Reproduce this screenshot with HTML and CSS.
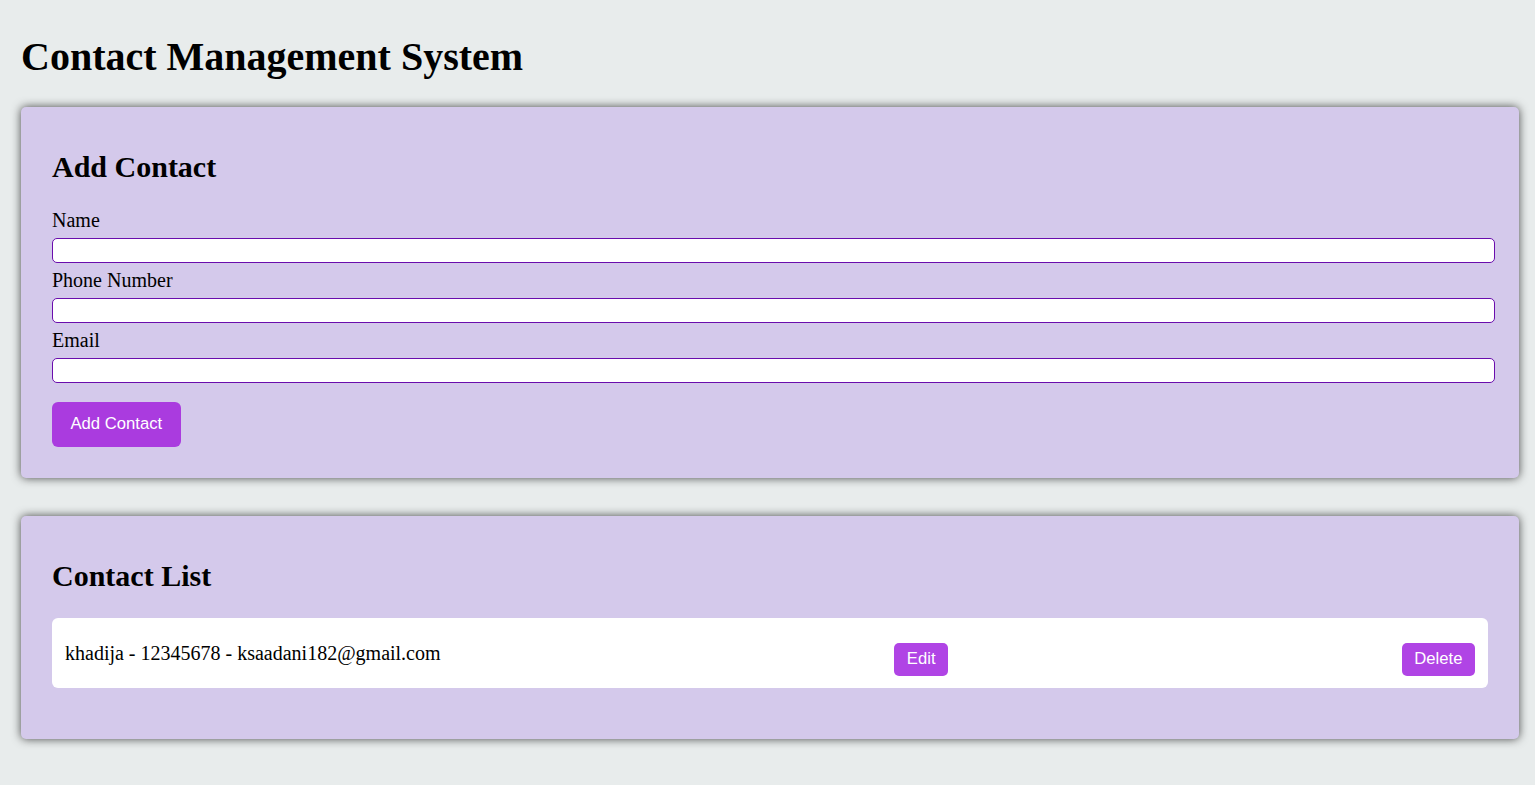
FILE: index.html
```html
<!DOCTYPE html>
<html lang="en">
<head>
<meta charset="utf-8">
<title>Contact Management System</title>
<link rel="stylesheet" href="styles.css">
</head>
<body>
  <h1 class="title">Contact Management System</h1>

  <section class="card">
    <h2 class="card-title">Add Contact</h2>
    <form class="form">
      <label class="label" for="name">Name</label>
      <input class="input" id="name" type="text">
      <label class="label" for="phone">Phone Number</label>
      <input class="input" id="phone" type="text">
      <label class="label" for="email">Email</label>
      <input class="input" id="email" type="text">
      <button class="btn btn-primary" type="button">Add Contact</button>
    </form>
  </section>

  <section class="card card-list">
    <h2 class="card-title">Contact List</h2>
    <ul class="list">
      <li class="item">
        <span class="item-text">khadija - 12345678 - ksaadani182@gmail.com</span>
        <button class="btn btn-small" type="button">Edit</button>
        <button class="btn btn-small" type="button">Delete</button>
      </li>
    </ul>
  </section>
</body>
</html>
```

FILE: styles.css
```css
* {
  box-sizing: border-box;
}

html, body {
  margin: 0;
}

body {
  background: #e8ecec;
  font-family: "Liberation Serif", "Times New Roman", serif;
  font-size: 20px;
  color: #000;
  padding: 0 16px 39px 21px;
}

.title {
  font-size: 40px;
  font-weight: bold;
  line-height: 46px;
  margin: 0;
  padding: 34px 0 27px;
}

.card {
  background: #d4c9eb;
  border-radius: 5px;
  box-shadow: 0 0 10px rgba(0, 0, 0, 0.7);
  padding: 31px;
}

.card-list {
  margin-top: 38px;
}

.card-title {
  font-size: 30px;
  font-weight: bold;
  line-height: 34px;
  margin: 12px 0 25px;
}

.form {
  display: flex;
  flex-direction: column;
  align-items: flex-start;
}

.label {
  display: block;
  line-height: 23px;
  margin-bottom: 6px;
}

.input {
  width: calc(100% + 7px);
  height: 25px;
  border: 1px solid #6a0dad;
  border-radius: 5px;
  background: #fff;
  margin: 0 0 6px;
  padding: 0 3px;
  font-family: "Liberation Sans", Arial, sans-serif;
  font-size: 16px;
}

.btn {
  font-family: "Liberation Sans", Arial, sans-serif;
  color: #fff;
  border: none;
  cursor: pointer;
  line-height: 1;
}

.btn-primary {
  background: #aa3bdf;
  font-size: 16.67px;
  height: 45px;
  padding: 0 18.5px 1px;
  border-radius: 6px;
  margin-top: 13px;
}

.list {
  list-style: none;
  margin: 0 0 20px;
  padding: 0;
}

.item {
  background: #fff;
  border-radius: 6px;
  padding: 12.5px 13px 12px 13px;
  display: flex;
  justify-content: space-between;
  align-items: center;
}

.item-text {
  line-height: 23px;
}

.btn-small {
  background: #b044e5;
  font-size: 16.67px;
  height: 33px;
  padding: 0 12.5px 1px;
  border-radius: 5px;
  margin-top: 12.5px;
}
```
